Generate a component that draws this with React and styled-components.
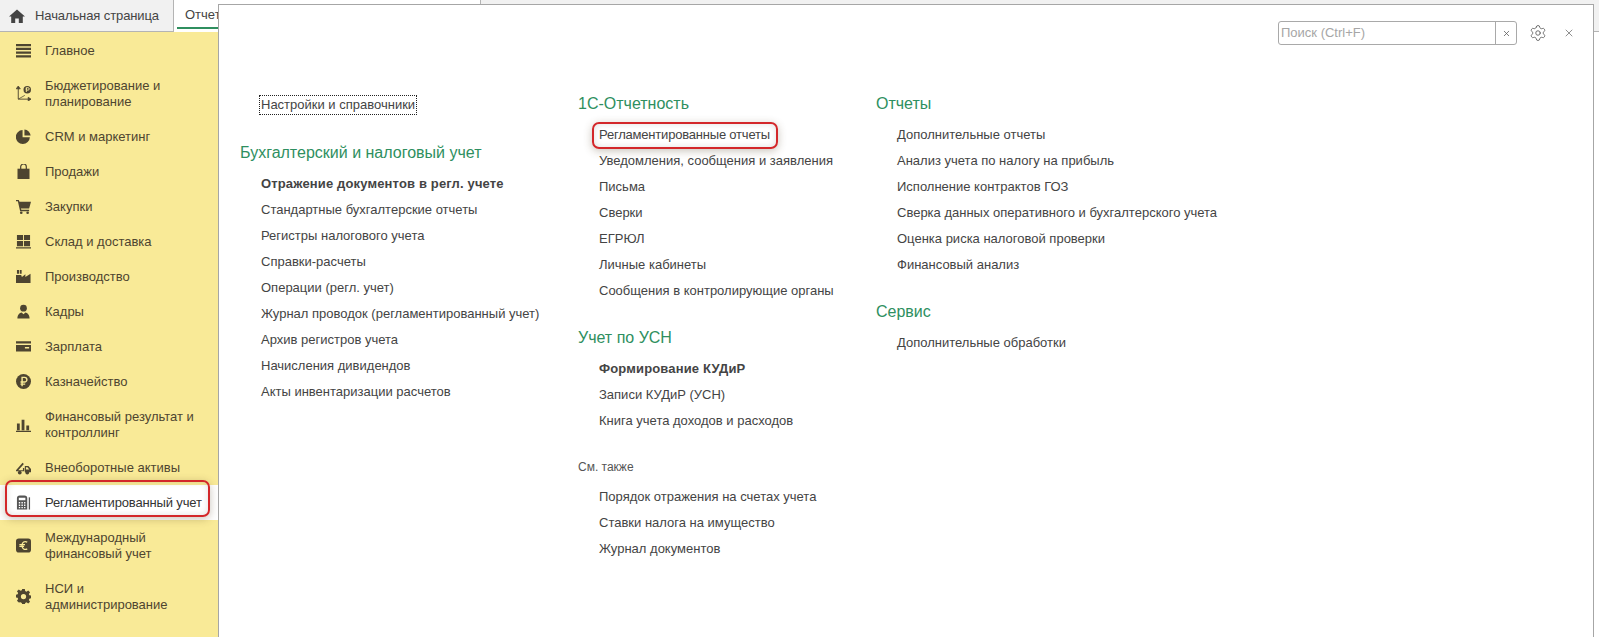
import React from 'react';
import styled, { createGlobalStyle } from 'styled-components';
import { Settings, X } from 'lucide-react';

const GlobalStyle = createGlobalStyle`
  html, body {
    margin: 0;
    height: 100%;
    background: #fff;
    font-family: 'Liberation Sans', Arial, sans-serif;
  }
  #root {
    height: 100%;
  }
`;

const Page = styled.div`
  position: relative;
  width: 1599px;
  height: 637px;
  overflow: hidden;
  display: flex;
  flex-direction: column;
`;

const TabBar = styled.div`
  height: 31px;
  flex: none;
  display: flex;
  background: #f1f1f1;
  border-bottom: 1px solid #b4b4b4;
`;

const HomeTab = styled.div`
  width: 174px;
  display: flex;
  align-items: center;
  gap: 10px;
  padding-left: 9px;
  box-sizing: border-box;
  font-size: 13px;
  letter-spacing: -0.1px;
  color: #444;
  border-right: 1px solid #b4b4b4;
  svg {
    width: 16px;
    height: 16px;
    fill: #444;
    flex: none;
  }
`;

const OpenTab = styled.div`
  width: 307px;
  height: 32px;
  box-sizing: border-box;
  background: #fff;
  border-right: 1px solid #b4b4b4;
  padding: 7px 0 0 11px;
  font-size: 13px;
  color: #444;
  position: relative;
  &::after {
    content: '';
    position: absolute;
    left: 3px;
    right: 3px;
    bottom: 3px;
    height: 2px;
    background: #2f8f5f;
  }
`;

const Sidebar = styled.nav`
  width: 218px;
  flex: 1;
  background: #f9ea97;
  display: flex;
  flex-direction: column;
  padding-top: 1px;
`;

const NavItem = styled.div`
  position: relative;
  height: ${(p) => (p.$tall ? 51 : 35)}px;
  flex: none;
  display: flex;
  align-items: center;
  gap: 14px;
  padding-left: 16px;
  font-size: 13px;
  line-height: 16px;
  white-space: nowrap;
  color: ${(p) => (p.$active ? '#333' : '#4e4530')};
  background: ${(p) => (p.$active ? '#fff' : 'transparent')};
  svg {
    width: 15px;
    height: 15px;
    flex: none;
    fill: ${(p) => (p.$active ? '#555' : '#4e4530')};
  }
`;

const NavLabel = styled.span`
  letter-spacing: ${(p) => (p.$active ? '-0.15px' : '0')};
`;

const RedFrame = styled.span`
  position: absolute;
  left: ${(p) => p.$left}px;
  right: ${(p) => p.$right}px;
  top: ${(p) => p.$top}px;
  bottom: ${(p) => p.$bottom}px;
  border: 2px solid #d3272a;
  border-radius: 7px;
  box-shadow: 0 2px 8px rgba(80, 60, 30, 0.3), inset 0 0 6px rgba(80, 80, 80, 0.18);
  pointer-events: none;
`;

const Panel = styled.section`
  position: absolute;
  left: 218px;
  top: 4px;
  right: 5px;
  bottom: -2px;
  box-sizing: border-box;
  background: #fff;
  border: 1px solid #a6a6a6;
  display: flex;
  flex-direction: column;
`;

const PanelHeader = styled.div`
  height: 86px;
  flex: none;
  box-sizing: border-box;
  display: flex;
  justify-content: flex-end;
  align-items: flex-start;
  padding: 16px 16px 0 0;
`;

const SearchBox = styled.div`
  width: 239px;
  height: 24px;
  box-sizing: border-box;
  display: flex;
  border: 1px solid #a9a9a9;
  border-radius: 3px;
  font-size: 13px;
  color: #a6a6a6;
  span:first-child {
    flex: 1;
    padding: 3px 2px;
  }
`;

const ClearButton = styled.span`
  width: 20px;
  border-left: 1px solid #a9a9a9;
  display: flex;
  align-items: center;
  justify-content: center;
  color: #555;
`;

const ToolButton = styled.span`
  display: flex;
  align-items: center;
  justify-content: center;
  height: 24px;
  width: ${(p) => p.$width}px;
  margin-left: ${(p) => p.$gap}px;
  color: #555;
`;

const Columns = styled.div`
  display: flex;
  padding-left: 21px;
`;

const Column = styled.div`
  width: ${(p) => p.$width}px;
  flex: none;
`;

const Heading = styled.h3`
  margin: ${(p) => (p.$first ? 0 : '21px')} 0 5px;
  height: 26px;
  font-size: 16px;
  font-weight: 400;
  line-height: 26px;
  color: #2e8f60;
`;

const SeeAlso = styled.div`
  margin: 20px 0 4px;
  height: 26px;
  line-height: 26px;
  font-size: 12px;
  color: #555;
`;

const LinkRow = styled.div`
  height: 26px;
  line-height: 26px;
  padding-left: 21px;
  font-size: 13px;
  white-space: nowrap;
  color: #444;
  font-weight: ${(p) => (p.$bold ? 700 : 400)};
  letter-spacing: ${(p) => (p.$bold ? '0.15px' : '0')};
`;

const FocusRow = styled(LinkRow)`
  margin-top: 2px;
`;

const FramedLink = styled.span`
  position: relative;
  display: inline-block;
  height: 26px;
  letter-spacing: -0.2px;
`;

const FocusedLink = styled.span`
  display: inline-block;
  height: 20px;
  line-height: 18px;
  box-sizing: border-box;
  padding: 0 1px;
  margin: 2px 0 0 -2px;
  border: 1px dotted #222;
  vertical-align: top;
`;

const icons = {
  menu: <path d="M0 1h16v2.4H0zM0 5h16v2.4H0zM0 9h16v2.4H0zM0 13h16v2.4H0z" />,
  budget: (
    <>
      <path d="M2.4 2v12h13" fill="none" stroke="#4e4530" strokeWidth="1" />
      <path d="M2.4 0L4.6 3H.2zM16 14l-3 2v-4zM2.4 14l7-4" stroke="#4e4530" strokeWidth="0.8" />
      <circle cx="12" cy="4" r="4" />
      <path d="M11 1.8h1.8a1.2 1.2 0 0 1 0 2.6H11zM11 1.8V6.4" fill="none" stroke="#f9ea97" strokeWidth="1" />
    </>
  ),
  pie: (
    <>
      <path d="M7 1a7.5 7.5 0 1 0 7.8 7.8H7z" />
      <path d="M9 0.6a7 7 0 0 1 6.6 6.4H9z" />
    </>
  ),
  bag: (
    <>
      <path d="M1.6 5h12.8v11H1.6z" />
      <path d="M5 6V3a3 3 0 0 1 6 0v3" fill="none" stroke="#4e4530" strokeWidth="1.3" />
    </>
  ),
  cart: (
    <>
      <path d="M0 1h3l.7 2H16l-2 7H5.2l.5 1.5H14V13H4.4L2 2.5H0z" />
      <circle cx="5.6" cy="14.6" r="1.4" />
      <circle cx="12.4" cy="14.6" r="1.4" />
    </>
  ),
  stock: <path d="M1 1h6.5v5.5H1zM8.5 1H15v5.5H8.5zM1 7.5h6.5V13H1zM8.5 7.5H15V13H8.5zM0 14h16v1.4H0z" />,
  factory: <path d="M1 1h2.2v4H1zM4 1h2v4H4zM0 15V6.5h5.5l.8 2 3.7-3v3l5.5-3.5V15z" />,
  person: (
    <>
      <circle cx="8" cy="4.4" r="3.6" />
      <path d="M1.5 15.5c0-4 2.4-6 4.5-6.4L8 11l2-1.9c2.1.4 4.5 2.4 4.5 6.4z" />
    </>
  ),
  card: <path d="M0 2.5h16v2.4H0zM0 6.4h16v7H0zM9.5 8.5v1.5h4.5V8.5z" fillRule="evenodd" />,
  ruble: (
    <>
      <circle cx="8" cy="8" r="8" />
      <path d="M6.5 13V3.6h2.6a2.5 2.5 0 0 1 0 5H4.8M4.8 10.8h5" fill="none" stroke="#f9ea97" strokeWidth="1.5" />
    </>
  ),
  bars: <path d="M1 7h3v7H1zM6 3h3v11H6zM11 9h3v5h-3zM0 14.6h16V16H0z" />,
  truck: (
    <>
      <path d="M0 11L7 3l1.4 1.2-6 6.8h5V8.5h1.4V12H0z" />
      <path d="M9.4 6.5h3.8l2.8 3.2V13H9.4zM10.6 7.6v2.4h3.6l-2-2.4z" fillRule="evenodd" />
      <circle cx="4" cy="13.4" r="2" />
      <circle cx="12" cy="13.4" r="2" />
    </>
  ),
  calc: (
    <>
      <path
        d="M1 3.5A3 3 0 0 1 4 .5h5a3 3 0 0 1 3 3V15.5H1zM3 3v2.5h7V3zM3 7.5v1.5h1.5V7.5zM5.8 7.5v1.5h1.5V7.5zM8.6 7.5v1.5H10V7.5zM3 10.2v1.5h1.5v-1.5zM5.8 10.2v1.5h1.5v-1.5zM8.6 10.2v1.5H10v-1.5zM3 12.9v1.3h1.5v-1.3zM5.8 12.9v1.3h1.5v-1.3zM8.6 12.9v1.3H10v-1.3z"
        fillRule="evenodd"
      />
      <path d="M13.6 2.5H15V15.5h-1.4z" />
    </>
  ),
  euro: (
    <>
      <rect y="0.5" width="16" height="15" rx="3" />
      <path d="M12 4.4c-2.8-1.6-5.6 0-5.6 3.6s2.8 5.2 5.6 3.6M3.6 7h6M3.6 9h5" fill="none" stroke="#f9ea97" strokeWidth="1.3" />
    </>
  ),
  gear: (
    <path
      d="M6.6 0h2.8l.4 2.2 1.4.6L13 1.5l2 2-1.3 1.8.6 1.4 2.2.4v2.8l-2.2.4-.6 1.4 1.3 1.8-2 2-1.8-1.3-1.4.6-.4 2.2H6.6l-.4-2.2-1.4-.6L3 14.5l-2-2 1.3-1.8-.6-1.4L-.5 8.9V6.1l2.2-.4.6-1.4L1 2.5l2-2 1.8 1.3 1.4-.6zM8 5.2a2.8 2.8 0 1 0 0 5.6 2.8 2.8 0 0 0 0-5.6z"
      fillRule="evenodd"
    />
  ),
};

const navItems = [
  { icon: 'menu', label: 'Главное' },
  { icon: 'budget', label: <>Бюджетирование и<br />планирование</>, tall: true },
  { icon: 'pie', label: 'CRM и маркетинг' },
  { icon: 'bag', label: 'Продажи' },
  { icon: 'cart', label: 'Закупки' },
  { icon: 'stock', label: 'Склад и доставка' },
  { icon: 'factory', label: 'Производство' },
  { icon: 'person', label: 'Кадры' },
  { icon: 'card', label: 'Зарплата' },
  { icon: 'ruble', label: 'Казначейство' },
  { icon: 'bars', label: <>Финансовый результат и<br />контроллинг</>, tall: true },
  { icon: 'truck', label: 'Внеоборотные активы' },
  { icon: 'calc', label: 'Регламентированный учет', active: true },
  { icon: 'euro', label: <>Международный<br />финансовый учет</>, tall: true },
  { icon: 'gear', label: <>НСИ и<br />администрирование</>, tall: true },
];

const accountingLinks = [
  { label: 'Отражение документов в регл. учете', bold: true },
  { label: 'Стандартные бухгалтерские отчеты' },
  { label: 'Регистры налогового учета' },
  { label: 'Справки-расчеты' },
  { label: 'Операции (регл. учет)' },
  { label: 'Журнал проводок (регламентированный учет)' },
  { label: 'Архив регистров учета' },
  { label: 'Начисления дивидендов' },
  { label: 'Акты инвентаризации расчетов' },
];

const reportingLinks = [
  { label: 'Регламентированные отчеты', framed: true },
  { label: 'Уведомления, сообщения и заявления' },
  { label: 'Письма' },
  { label: 'Сверки' },
  { label: 'ЕГРЮЛ' },
  { label: 'Личные кабинеты' },
  { label: 'Сообщения в контролирующие органы' },
];

const usnLinks = [
  { label: 'Формирование КУДиР', bold: true },
  { label: 'Записи КУДиР (УСН)' },
  { label: 'Книга учета доходов и расходов' },
];

const seeAlsoLinks = [
  { label: 'Порядок отражения на счетах учета' },
  { label: 'Ставки налога на имущество' },
  { label: 'Журнал документов' },
];

const reportLinks = [
  { label: 'Дополнительные отчеты' },
  { label: 'Анализ учета по налогу на прибыль' },
  { label: 'Исполнение контрактов ГОЗ' },
  { label: 'Сверка данных оперативного и бухгалтерского учета' },
  { label: 'Оценка риска налоговой проверки' },
  { label: 'Финансовый анализ' },
];

const renderLinks = (links) =>
  links.map((link) => (
    <LinkRow key={link.label} $bold={link.bold}>
      {link.framed ? (
        <FramedLink>
          {link.label}
          <RedFrame $left={-7} $right={-8} $top={0} $bottom={-1} />
        </FramedLink>
      ) : (
        link.label
      )}
    </LinkRow>
  ));

const App = () => {
  return (
    <Page>
      <GlobalStyle />
      <TabBar>
        <HomeTab>
          <svg viewBox="0 0 16 16">
            <path d="M8 1.5L16 8.5h-2.2V15H9.8v-4.5H6.2V15H2.2V8.5H0z" />
          </svg>
          Начальная страница
        </HomeTab>
        <OpenTab>Отчеты</OpenTab>
      </TabBar>
      <Sidebar>
        {navItems.map((item, index) => (
          <NavItem key={index} $tall={item.tall} $active={item.active}>
            <svg viewBox="0 0 16 16">{icons[item.icon]}</svg>
            <NavLabel $active={item.active}>{item.label}</NavLabel>
            {item.active && <RedFrame $left={5} $right={8} $top={-5} $bottom={3} />}
          </NavItem>
        ))}
      </Sidebar>
      <Panel>
        <PanelHeader>
          <SearchBox>
            <span>Поиск (Ctrl+F)</span>
            <ClearButton>
              <X size={9} strokeWidth={2} />
            </ClearButton>
          </SearchBox>
          <ToolButton $width={18} $gap={12}>
            <Settings size={18} strokeWidth={1.1} />
          </ToolButton>
          <ToolButton $width={16} $gap={14}>
            <X size={12} strokeWidth={1.3} />
          </ToolButton>
        </PanelHeader>
        <Columns>
          <Column $width={338}>
            <FocusRow>
              <FocusedLink>Настройки и справочники</FocusedLink>
            </FocusRow>
            <Heading>Бухгалтерский и налоговый учет</Heading>
            {renderLinks(accountingLinks)}
          </Column>
          <Column $width={298}>
            <Heading $first>1С-Отчетность</Heading>
            {renderLinks(reportingLinks)}
            <Heading>Учет по УСН</Heading>
            {renderLinks(usnLinks)}
            <SeeAlso>См. также</SeeAlso>
            {renderLinks(seeAlsoLinks)}
          </Column>
          <Column $width={400}>
            <Heading $first>Отчеты</Heading>
            {renderLinks(reportLinks)}
            <Heading>Сервис</Heading>
            {renderLinks([{ label: 'Дополнительные обработки' }])}
          </Column>
        </Columns>
      </Panel>
    </Page>
  );
};

export default App;
